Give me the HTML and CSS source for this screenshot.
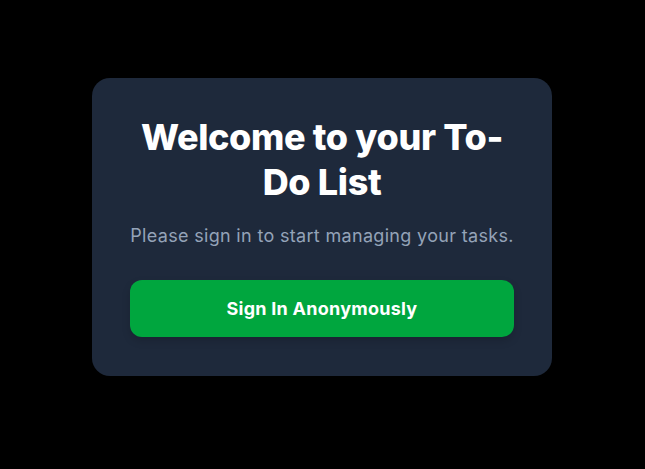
FILE: index.html
```html
<!DOCTYPE html>
<html lang="en">
<head>
<meta charset="utf-8">
<title>To-Do List</title>
<link rel="stylesheet" href="styles.css">
</head>
<body>
<main class="page">
  <section class="card">
    <h1 class="title">Welcome to your To-Do List</h1>
    <p class="subtitle">Please sign in to start managing your tasks.</p>
    <button class="btn" type="button">Sign In Anonymously</button>
  </section>
</main>
</body>
</html>
```

FILE: styles.css
```css
html, body {
  margin: 0;
  padding: 0;
  background: #000;
  height: 100%;
}
body {
  font-family: Inter, "Noto Sans", sans-serif;
}
.page {
  display: flex;
  justify-content: center;
  padding-top: 78px;
  padding-right: 1px;
}
.card {
  width: 460px;
  box-sizing: border-box;
  background: #1e293b;
  border-radius: 18px;
  padding: 37px 38px 39px;
  text-align: center;
}
.title {
  margin: 0;
  color: #fff;
  font-size: 36px;
  line-height: 45px;
  font-weight: 800;
  letter-spacing: -0.36px;
}
.subtitle {
  margin: 17px 0 30px;
  color: #94a3b8;
  font-size: 18px;
  line-height: 28px;
  letter-spacing: 0.32px;
}
.btn {
  display: block;
  width: 100%;
  height: 57px;
  border: 0;
  border-radius: 12px;
  background: #00a63e;
  color: #fff;
  font-family: inherit;
  font-size: 18px;
  font-weight: 700;
  letter-spacing: 0.25px;
  box-shadow: 0 4px 8px rgba(0,0,0,0.15);
}
```
